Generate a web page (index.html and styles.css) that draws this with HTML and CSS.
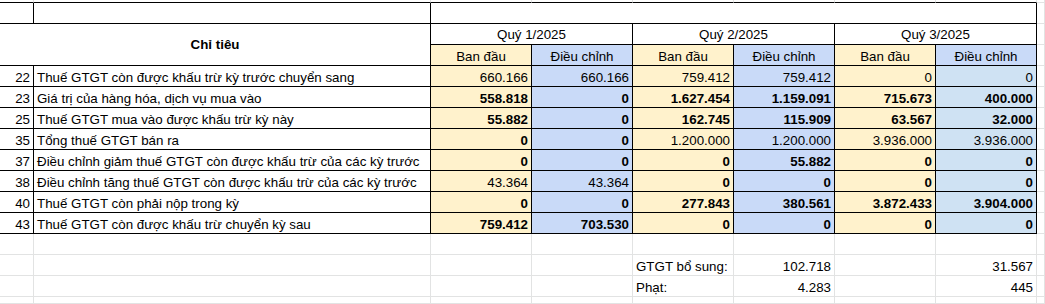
FILE: index.html
```html
<!DOCTYPE html>
<html lang="vi">
<head>
<meta charset="utf-8">
<title>Chỉ tiêu GTGT</title>
<link rel="stylesheet" href="styles.css">
</head>
<body>
<div class="sheet">
  <!-- partial top row -->
  <div class="c tb"></div><div class="c tb"></div><div class="c tb"></div><div class="c tb"></div><div class="c tb"></div><div class="c tb"></div><div class="c tb"></div><div class="c tb"></div><div class="c"></div>

  <!-- row 1 -->
  <div class="c k"></div>
  <div class="c k"></div>
  <div class="c k s6"></div>
  <div class="c"></div>

  <!-- header rows -->
  <div class="c k s2 r2 mid center bold">Chỉ tiêu</div>
  <div class="c k s2 mid center">Quý 1/2025</div>
  <div class="c k s2 mid center">Quý 2/2025</div>
  <div class="c k s2 mid center">Quý 3/2025</div>
  <div class="c"></div>
  <div class="c k y center">Ban đầu</div>
  <div class="c k bl center">Điều chỉnh</div>
  <div class="c k y center">Ban đầu</div>
  <div class="c k bl center">Điều chỉnh</div>
  <div class="c k y center">Ban đầu</div>
  <div class="c k bl center">Điều chỉnh</div>
  <div class="c"></div>

  <!-- 22 -->
  <div class="c k right">22</div>
  <div class="c k">Thuế GTGT còn được khấu trừ kỳ trước chuyển sang</div>
  <div class="c k y right">660.166</div>
  <div class="c k bl right">660.166</div>
  <div class="c k y right">759.412</div>
  <div class="c k bl right">759.412</div>
  <div class="c k y right">0</div>
  <div class="c k lb right">0</div>
  <div class="c"></div>

  <!-- 23 -->
  <div class="c k right">23</div>
  <div class="c k">Giá trị của hàng hóa, dịch vụ mua vào</div>
  <div class="c k y right bold">558.818</div>
  <div class="c k bl right bold">0</div>
  <div class="c k y right bold">1.627.454</div>
  <div class="c k bl right bold">1.159.091</div>
  <div class="c k y right bold">715.673</div>
  <div class="c k lb right bold">400.000</div>
  <div class="c"></div>

  <!-- 25 -->
  <div class="c k right">25</div>
  <div class="c k">Thuế GTGT mua vào được khấu trừ kỳ này</div>
  <div class="c k y right bold">55.882</div>
  <div class="c k bl right bold">0</div>
  <div class="c k y right bold">162.745</div>
  <div class="c k bl right bold">115.909</div>
  <div class="c k y right bold">63.567</div>
  <div class="c k lb right bold">32.000</div>
  <div class="c"></div>

  <!-- 35 -->
  <div class="c k right">35</div>
  <div class="c k">Tổng thuế GTGT bán ra</div>
  <div class="c k y right bold">0</div>
  <div class="c k bl right bold">0</div>
  <div class="c k y right">1.200.000</div>
  <div class="c k bl right">1.200.000</div>
  <div class="c k y right">3.936.000</div>
  <div class="c k lb right">3.936.000</div>
  <div class="c"></div>

  <!-- 37 -->
  <div class="c k right">37</div>
  <div class="c k">Điều chỉnh giảm thuế GTGT còn được khấu trừ của các kỳ trước</div>
  <div class="c k y right bold">0</div>
  <div class="c k bl right bold">0</div>
  <div class="c k y right bold">0</div>
  <div class="c k bl right bold">55.882</div>
  <div class="c k y right bold">0</div>
  <div class="c k lb right bold">0</div>
  <div class="c"></div>

  <!-- 38 -->
  <div class="c k right">38</div>
  <div class="c k">Điều chỉnh tăng thuế GTGT còn được khấu trừ của các kỳ trước</div>
  <div class="c k y right">43.364</div>
  <div class="c k bl right">43.364</div>
  <div class="c k y right bold">0</div>
  <div class="c k bl right bold">0</div>
  <div class="c k y right bold">0</div>
  <div class="c k lb right bold">0</div>
  <div class="c"></div>

  <!-- 40 -->
  <div class="c k right">40</div>
  <div class="c k">Thuế GTGT còn phải nộp trong kỳ</div>
  <div class="c k y right bold">0</div>
  <div class="c k bl right bold">0</div>
  <div class="c k y right bold">277.843</div>
  <div class="c k bl right bold">380.561</div>
  <div class="c k y right bold">3.872.433</div>
  <div class="c k lb right bold">3.904.000</div>
  <div class="c"></div>

  <!-- 43 -->
  <div class="c k right">43</div>
  <div class="c k">Thuế GTGT còn được khấu trừ chuyển kỳ sau</div>
  <div class="c k y right bold">759.412</div>
  <div class="c k bl right bold">703.530</div>
  <div class="c k y right bold">0</div>
  <div class="c k bl right bold">0</div>
  <div class="c k y right bold">0</div>
  <div class="c k lb right bold">0</div>
  <div class="c"></div>

  <!-- empty -->
  <div class="c"></div><div class="c"></div><div class="c"></div><div class="c"></div><div class="c"></div><div class="c"></div><div class="c"></div><div class="c"></div><div class="c"></div>

  <!-- GTGT bổ sung -->
  <div class="c"></div><div class="c"></div><div class="c"></div><div class="c"></div>
  <div class="c">GTGT bổ sung:</div>
  <div class="c right">102.718</div>
  <div class="c"></div>
  <div class="c right">31.567</div>
  <div class="c"></div>

  <!-- Phạt -->
  <div class="c"></div><div class="c"></div><div class="c"></div><div class="c"></div>
  <div class="c">Phạt:</div>
  <div class="c right">4.283</div>
  <div class="c"></div>
  <div class="c right">445</div>
  <div class="c"></div>

  <!-- partial bottom row -->
  <div class="c"></div><div class="c"></div><div class="c"></div><div class="c"></div><div class="c"></div><div class="c"></div><div class="c"></div><div class="c"></div><div class="c"></div>
</div>
</body>
</html>
```

FILE: styles.css
```css
html, body {
  margin: 0;
  padding: 0;
  background: #ffffff;
}

.sheet {
  display: grid;
  grid-template-columns: 34px 397px repeat(6, 101px) 1fr;
  grid-template-rows: 3px repeat(14, 21px) 1fr;
  width: 1045px;
  height: 304px;
  overflow: hidden;
  font-family: "Liberation Sans", Arial, sans-serif;
  font-size: 13.33px;
  line-height: 15px;
  color: #000000;
}

.c {
  box-sizing: border-box;
  border-right: 1px solid #e2e3e3;
  border-bottom: 1px solid #e2e3e3;
  display: flex;
  align-items: flex-end;
  justify-content: flex-start;
  padding: 0 3px 1px 3px;
  white-space: nowrap;
  overflow: visible;
  min-width: 0;
}

.c.tb {
  border-bottom-color: #000000;
}

.c.k {
  border-right-color: #000000;
  border-bottom-color: #000000;
}

.s2 { grid-column: span 2; }
.s6 { grid-column: span 6; }
.r2 { grid-row: span 2; }

.mid { align-items: center; padding-bottom: 0; }
.center { justify-content: center; }
.right { justify-content: flex-end; }
.bold { font-weight: bold; }

.y { background: #fff2cc; }
.bl { background: #c9daf8; }
.lb { background: #cfe2f3; }
```
